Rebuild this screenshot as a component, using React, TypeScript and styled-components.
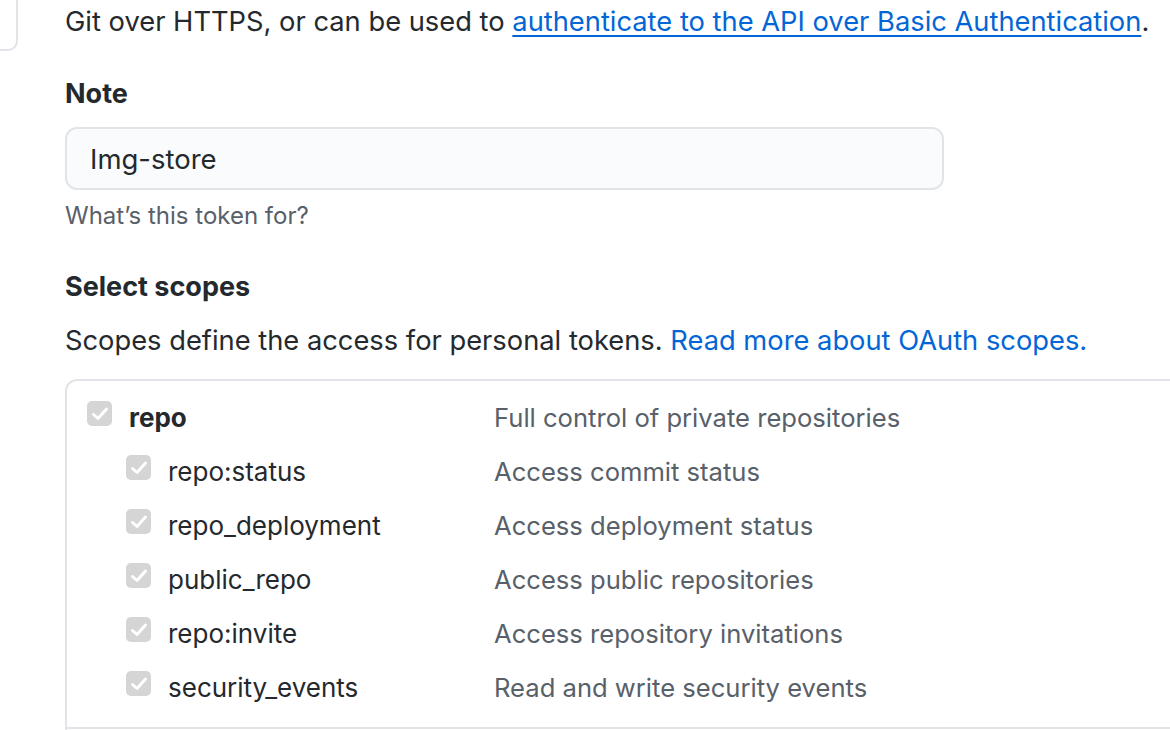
import React from "react";
import styled, { createGlobalStyle } from "styled-components";

const Global = createGlobalStyle`
  html, body { margin: 0; padding: 0; background: #fff; }
  body { font-family: Inter, "Noto Sans", sans-serif; color: #24292e; overflow: hidden; }
`;

const Page = styled.div`
  position: relative;
  width: 1170px;
  height: 730px;
  overflow: hidden;
`;

const SideBox = styled.div`
  position: absolute;
  left: -40px;
  top: -40px;
  width: 54px;
  height: 87px;
  border: 2px solid #e1e4e8;
  border-radius: 10px;
`;

const Content = styled.div`
  padding-left: 65px;
  display: flex;
  flex-direction: column;
`;

const Paragraph = styled.p<{ $top?: number }>`
  margin: ${(p) => p.$top ?? 0}px 0 0;
  font-size: 27.3px;
  line-height: 44px;
  white-space: nowrap;
`;

const Link = styled.a<{ $underline?: boolean }>`
  color: #0366d6;
  text-decoration: ${(p) => (p.$underline ? "underline" : "none")};
  text-underline-offset: 4px;
  text-decoration-thickness: 2px;
`;

const Label = styled.div<{ $top: number }>`
  margin-top: ${(p) => p.$top}px;
  font-size: 27px;
  font-weight: 700;
  line-height: 36px;
`;

const Input = styled.div`
  margin-top: 15px;
  width: 879px;
  height: 63px;
  box-sizing: border-box;
  border: 2px solid #e1e4e8;
  border-radius: 12px;
  background: #fafbfc;
  padding-left: 23px;
  display: flex;
  align-items: center;
  font-size: 27.5px;
`;

const Hint = styled.div`
  margin-top: 10px;
  font-size: 24px;
  color: #586069;
  line-height: 32px;
`;

const Table = styled.div`
  margin-top: 16px;
  width: 1200px;
  border: 2px solid #e1e4e8;
  border-radius: 12px;
  padding-top: 9px;
  padding-bottom: 60px;
`;

const Row = styled.div<{ $indent: boolean }>`
  display: grid;
  grid-template-columns: ${(p) => (p.$indent ? "61px 346px" : "22px 385px")} 1fr;
  align-items: center;
  height: 54px;
  padding-left: 20px;
  font-size: 26px;
`;

const Box = styled.span<{ $indent: boolean }>`
  margin-left: ${(p) => (p.$indent ? "39px" : "0")};
  width: 25px;
  height: 25px;
  border-radius: 5px;
  background: #d5d5d5;
  display: flex;
  align-items: center;
  justify-content: center;
  margin-top: -7px;
`;

const Name = styled.span<{ $bold: boolean }>`
  font-weight: ${(p) => (p.$bold ? 700 : 400)};
  color: #24292e;
  grid-column: 2;
  padding-left: 20px;
`;

const Desc = styled.span`
  color: #586069;
  font-size: 25.6px;
`;

const Divider = styled.div`
  margin-top: 13px;
  border-top: 2px solid #e1e4e8;
`;

const rows = [
  { name: "repo", desc: "Full control of private repositories", top: true },
  { name: "repo:status", desc: "Access commit status" },
  { name: "repo_deployment", desc: "Access deployment status" },
  { name: "public_repo", desc: "Access public repositories" },
  { name: "repo:invite", desc: "Access repository invitations" },
  { name: "security_events", desc: "Read and write security events" },
];

const Check = () => (
  <svg width="18" height="16" viewBox="0 0 18 16">
    <path d="M2.5 8.5 L7 12.5 L15.5 3" stroke="#fff" strokeWidth="3" fill="none" strokeLinecap="round" strokeLinejoin="round" />
  </svg>
);

export default function App() {
  return (
    <Page>
      <Global />
      <SideBox />
      <Content>
        <Paragraph>
          Git over HTTPS, or can be used to{" "}
          <Link $underline href="#">authenticate to the API over Basic Authentication</Link>.
        </Paragraph>
        <Label $top={32}>Note</Label>
        <Input>Img-store</Input>
        <Hint>What’s this token for?</Hint>
        <Label $top={37}>Select scopes</Label>
        <Paragraph $top={14}>
          Scopes define the access for personal tokens.{" "}
          <Link href="#">Read more about OAuth scopes.</Link>
        </Paragraph>
        <Table>
          {rows.map((r) => (
            <Row key={r.name} $indent={!r.top}>
              <Box $indent={!r.top}><Check /></Box>
              <Name $bold={!!r.top}>{r.name}</Name>
              <Desc>{r.desc}</Desc>
            </Row>
          ))}
          <Divider />
        </Table>
      </Content>
    </Page>
  );
}
